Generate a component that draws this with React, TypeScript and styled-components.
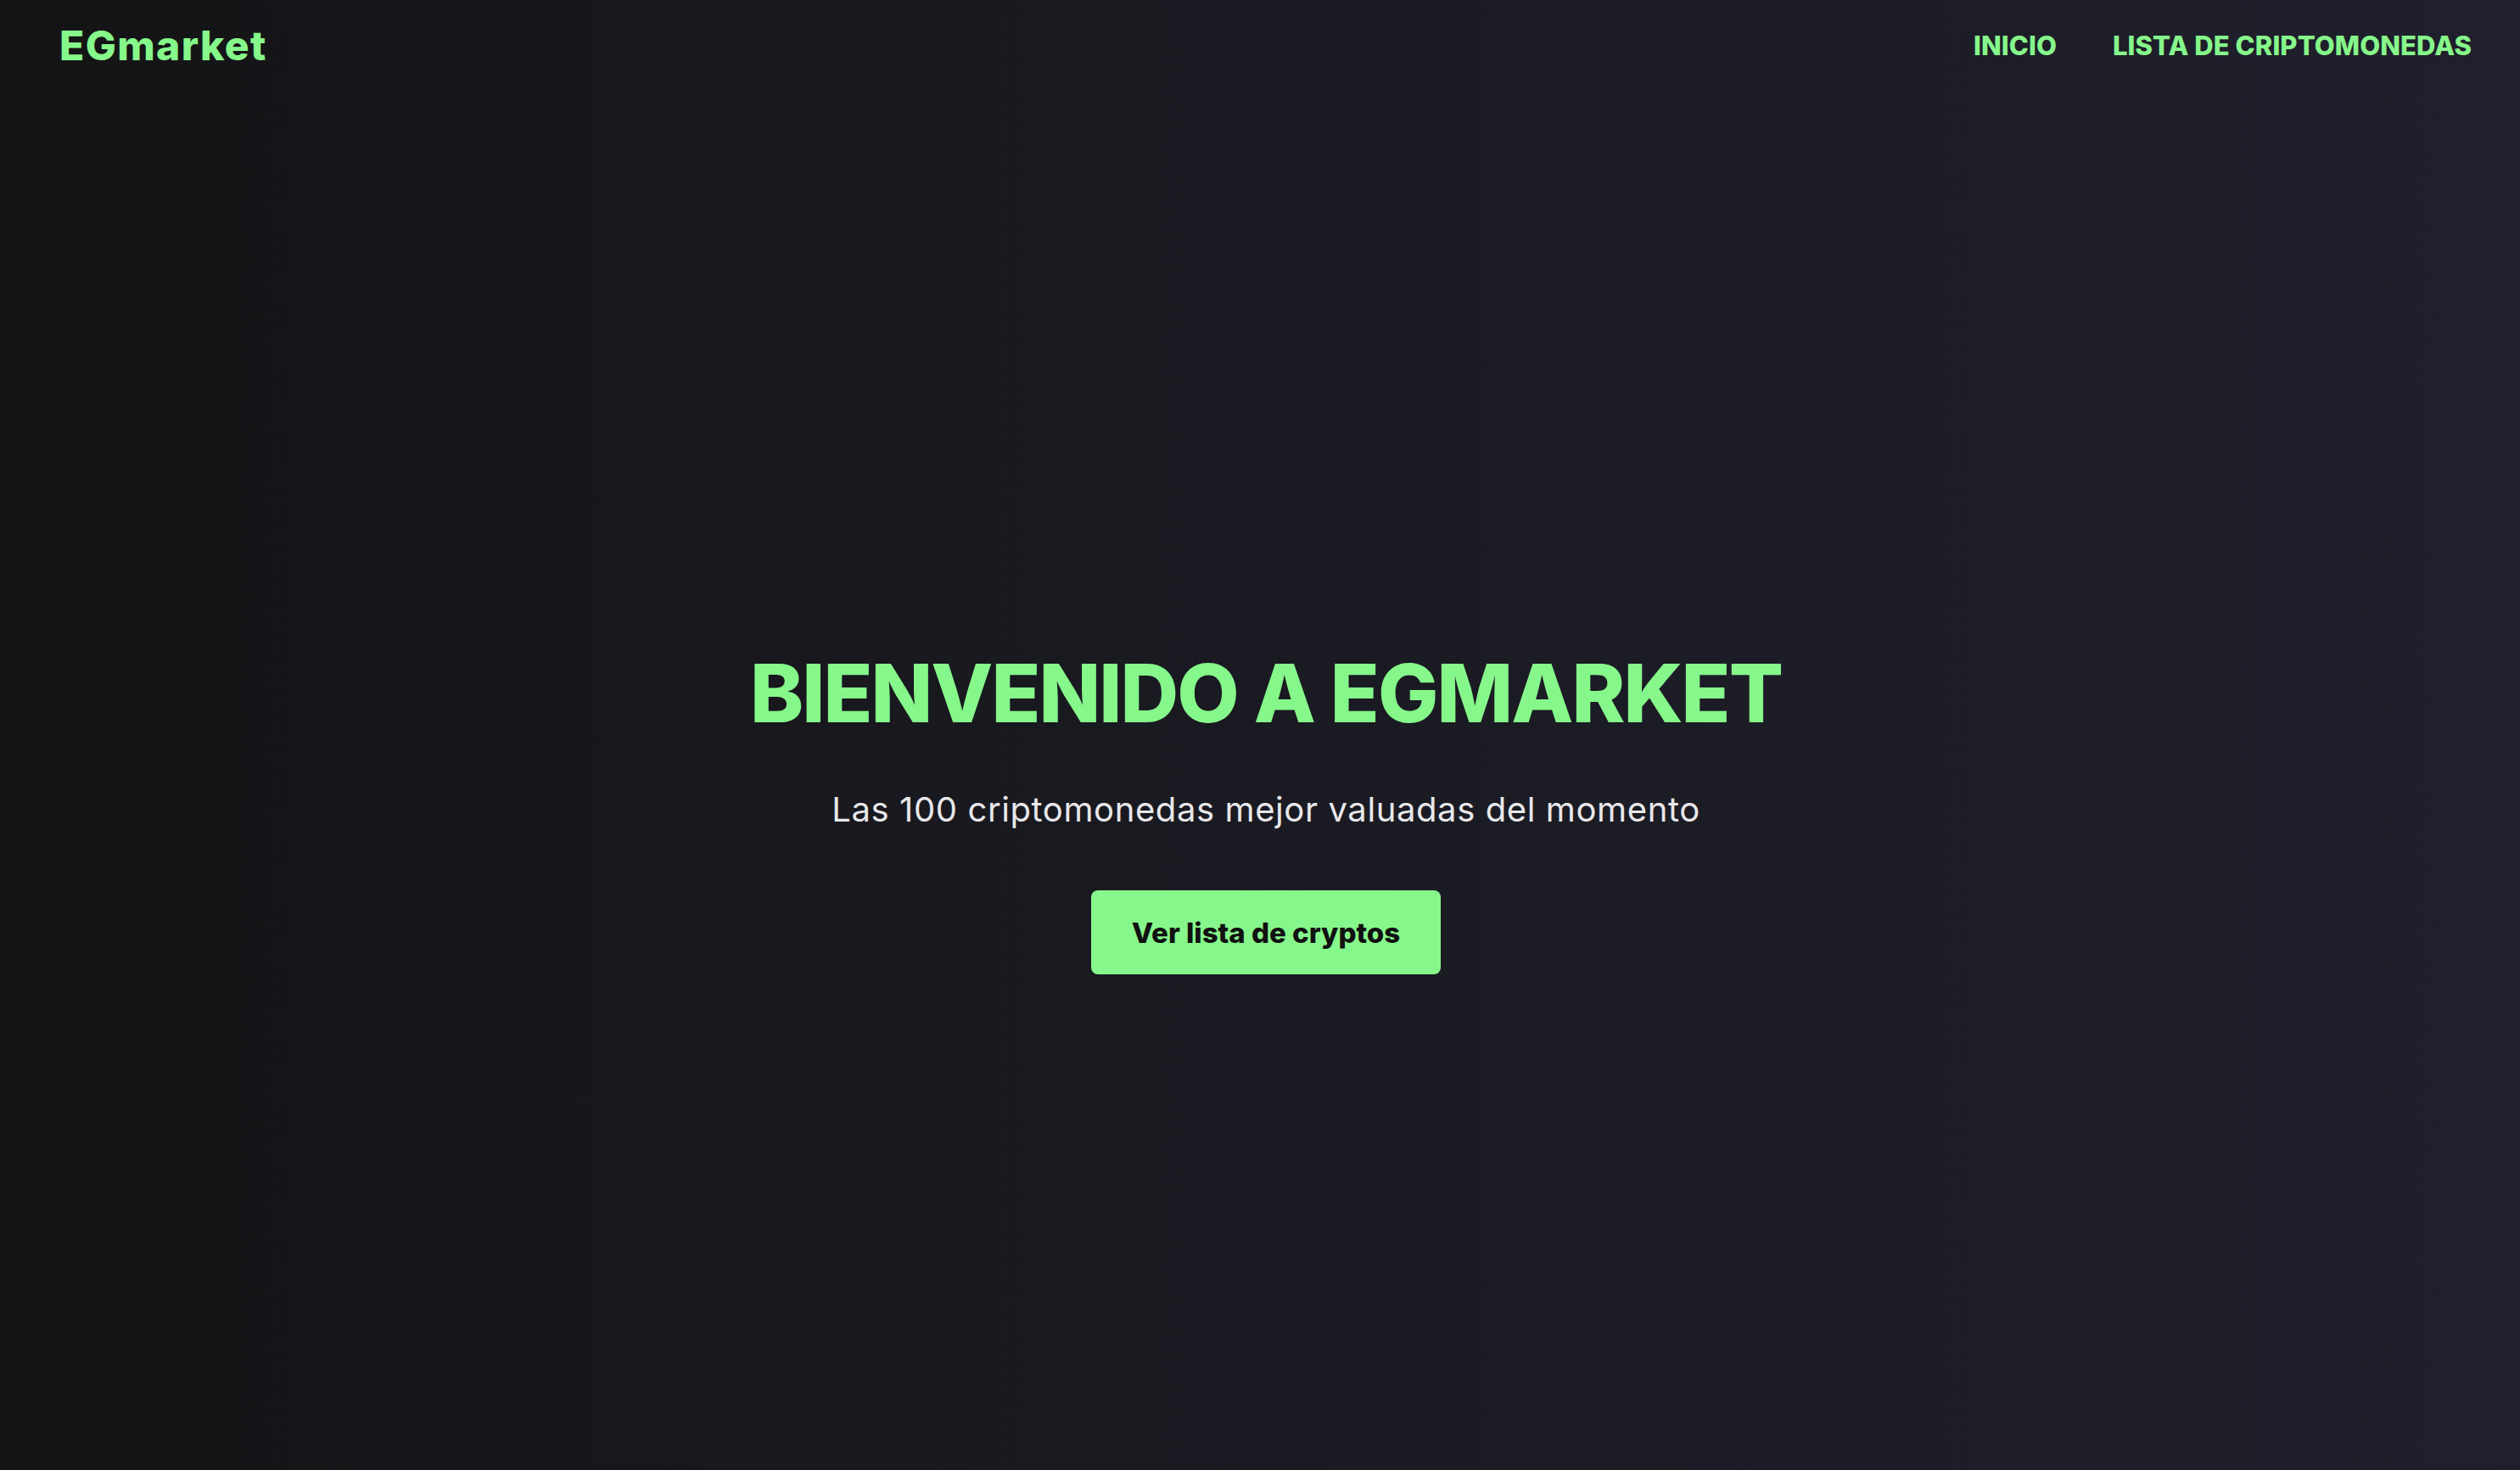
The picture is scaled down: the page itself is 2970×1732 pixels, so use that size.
import React from "react";
import styled, { createGlobalStyle } from "styled-components";

const GlobalStyle = createGlobalStyle`
  * { box-sizing: border-box; }
  html, body { margin: 0; padding: 0; }
  body {
    font-family: Inter, "Noto Sans", sans-serif;
    background: #141416;
  }
`;

const GREEN = "#86f78a";

const Page = styled.div`
  min-height: 100vh;
  display: flex;
  flex-direction: column;
  background: linear-gradient(90deg, #141416 0%, #1a1a22 50%, #20202d 100%);
`;

const Header = styled.header`
  display: flex;
  align-items: center;
  justify-content: space-between;
  padding: 16px 57px 0 70px;
  height: 90px;
`;

const Logo = styled.a`
  font-family: Inter, sans-serif;
  font-weight: 800;
  font-size: 48px;
  color: ${GREEN};
  text-decoration: none;
  letter-spacing: 1.4px;
`;

const Nav = styled.nav`
  display: flex;
  align-items: center;
  gap: 66px;
`;

const NavLink = styled.a`
  font-family: Inter, sans-serif;
  font-weight: 800;
  font-size: 31px;
  color: ${GREEN};
  text-transform: uppercase;
  text-decoration: none;
  letter-spacing: 0.1px;
`;

const Hero = styled.main`
  flex: 1;
  display: flex;
  flex-direction: column;
  align-items: center;
  justify-content: center;
  padding: 86px 0 0 14px;
`;

const Title = styled.h1`
  margin: 0;
  font-family: Inter, sans-serif;
  font-weight: 800;
  font-size: 95px;
  line-height: 1.2;
  color: ${GREEN};
  letter-spacing: -1.9px;
`;

const Subtitle = styled.p`
  margin: 55px 0 0;
  font-family: Inter, sans-serif;
  font-weight: 400;
  font-size: 40px;
  line-height: normal;
  color: #e8e8ea;
  letter-spacing: 0.6px;
`;

const CTA = styled.a`
  margin-top: 71px;
  display: flex;
  align-items: center;
  justify-content: center;
  width: 412px;
  height: 99px;
  border-radius: 8px;
  background: ${GREEN};
  color: #111111;
  font-family: Inter, sans-serif;
  font-weight: 800;
  font-size: 33px;
  text-decoration: none;
  letter-spacing: 0px;
`;

export default function App() {
  return (
    <>
      <GlobalStyle />
      <Page>
        <Header>
          <Logo href="#">EGmarket</Logo>
          <Nav>
            <NavLink href="#">Inicio</NavLink>
            <NavLink href="#">Lista de criptomonedas</NavLink>
          </Nav>
        </Header>
        <Hero>
          <Title>BIENVENIDO A EGMARKET</Title>
          <Subtitle>Las 100 criptomonedas mejor valuadas del momento</Subtitle>
          <CTA href="#">Ver lista de cryptos</CTA>
        </Hero>
      </Page>
    </>
  );
}
